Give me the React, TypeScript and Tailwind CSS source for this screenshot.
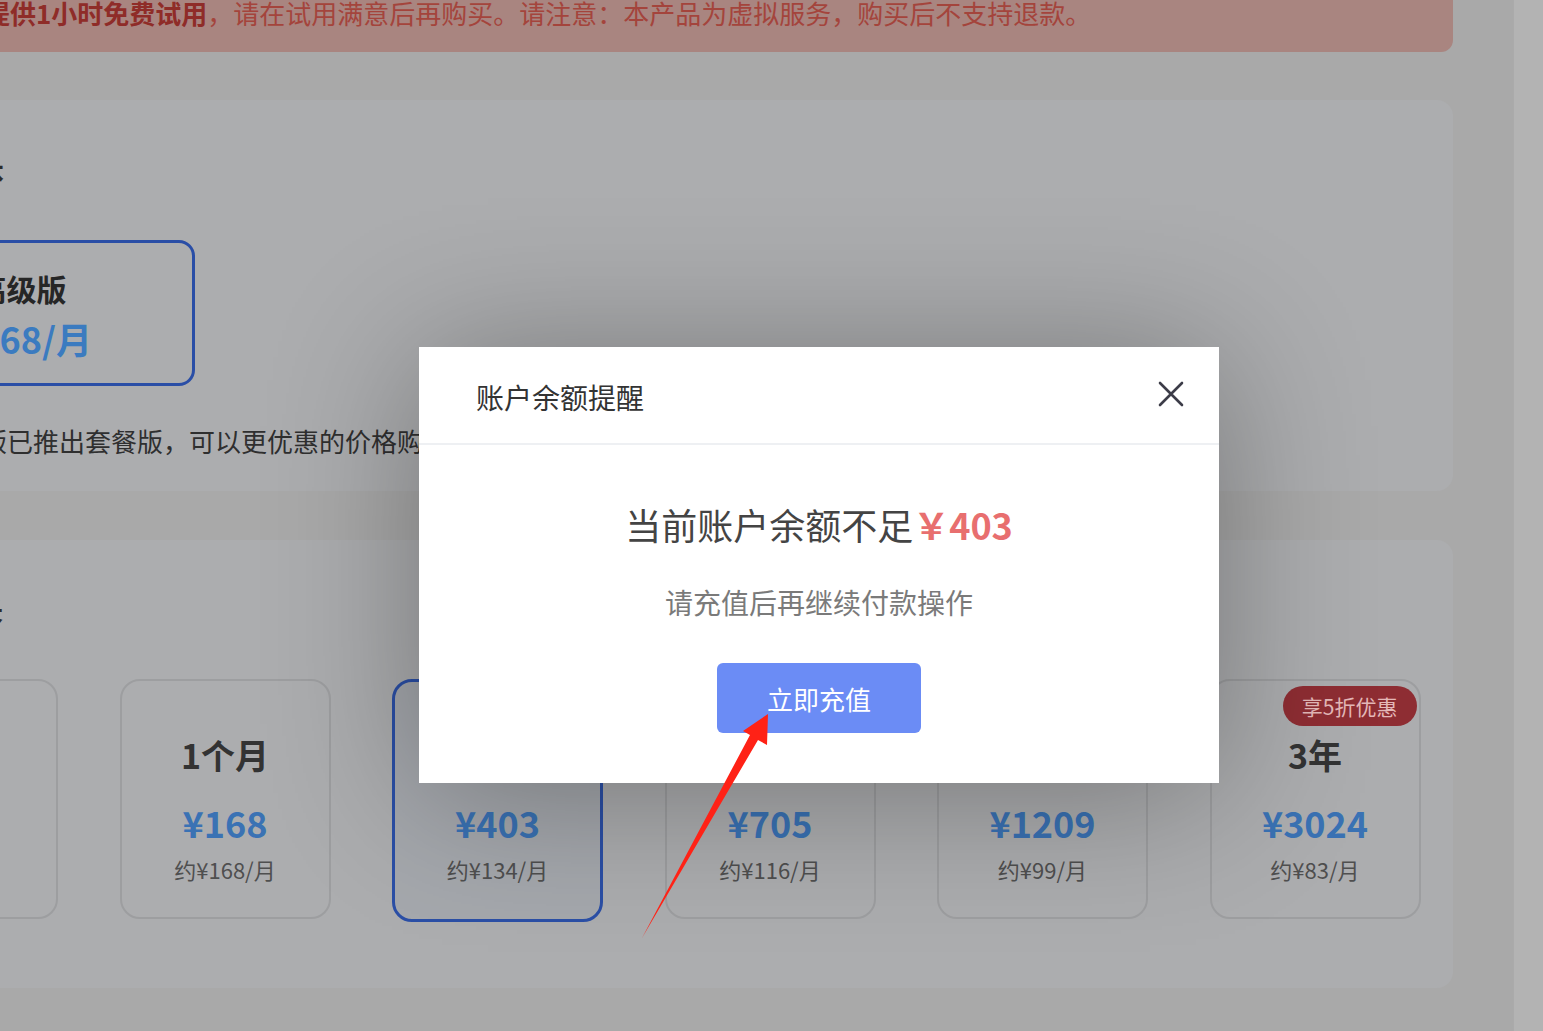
import { Fragment } from "react";

type Plan = {
  title: string;
  price: string;
  perMonth: string;
  selected?: boolean;
  badge?: string;
};

const plans: Plan[] = [
  { title: "7天", price: "¥42", perMonth: "约¥6/天" },
  { title: "1个月", price: "¥168", perMonth: "约¥168/月" },
  { title: "3个月", price: "¥403", perMonth: "约¥134/月", selected: true },
  { title: "6个月", price: "¥705", perMonth: "约¥116/月" },
  { title: "1年", price: "¥1209", perMonth: "约¥99/月" },
  { title: "3年", price: "¥3024", perMonth: "约¥83/月", badge: "享5折优惠" },
];

function PlanCard({ plan }: { plan: Plan }) {
  return (
    <div
      className={
        plan.selected
          ? "relative flex h-[243px] w-[211px] shrink-0 flex-col items-center rounded-[20px] border-[3px] border-[#2b4fa6] bg-[#a5a8ad] pt-[53px]"
          : "relative flex h-[240px] w-[211px] shrink-0 flex-col items-center rounded-[20px] border-2 border-[#9d9ea0] pt-[54px]"
      }
    >
      {plan.badge && (
        <div className="absolute right-[2px] top-[5px] rounded-full bg-[#8e2d33] px-[19px] text-[21px] leading-[40px] text-[#e4b8b8]">
          {plan.badge}
        </div>
      )}
      <div className="text-[34px] font-bold leading-[40px] text-[#333333]">{plan.title}</div>
      <div className="mt-[25px] text-[36px] font-bold leading-[44px] text-[#3a72b4]">{plan.price}</div>
      <div className="mt-[11px] text-[22px] leading-[28px] text-[#4f4f4f]">{plan.perMonth}</div>
    </div>
  );
}

export default function App() {
  return (
    <div className="relative flex h-[1031px] w-full overflow-hidden bg-[#a9a9a9] font-['Noto_Sans_CJK_SC','Noto_Sans',sans-serif]">
      <div className="min-w-0 flex-1 overflow-hidden">
        <div className="-ml-[220px] -mt-[28px] w-[1673px]">
          {/* notice bar */}
          <div className="rounded-br-xl bg-[#a98580] pb-[26px] pl-[22px] pt-[28px]">
            <p className="whitespace-nowrap text-[26px] leading-[26px] text-[#a4443c]">
              温馨提示：产品
              <span className="font-bold text-[#8f2c28]">提供1小时免费试用</span>
              ，请在试用满意后再购买。请注意：本产品为虚拟服务，购买后不支持退款。
            </p>
          </div>

          {/* version */}
          <section className="mt-[48px] h-[391px] rounded-2xl bg-[#acadaf] pl-[68px] pr-[32px] pt-[58px]">
            <h2 className="text-[26px] font-bold leading-[28px] text-[#2b2b2b]">选择产品版本</h2>
            <div className="mt-[54px] flex h-[146px] w-[347px] flex-col items-center rounded-2xl border-[3px] border-[#2a4ea6] pt-[27px]">
              <div className="text-[30px] font-bold leading-[36px] text-[#262626]">高级版</div>
              <div className="mt-[12px] pl-[6px] text-[36px] font-bold leading-[40px] text-[#3b7bc0]">¥168/月</div>
            </div>
            <p className="ml-[3px] mt-[39px] whitespace-nowrap text-[26px] leading-[32px] text-[#2f2f2f]">
              提示：高级版已推出套餐版，可以更优惠的价格购买更长时长。
            </p>
          </section>

          {/* duration */}
          <section className="mt-[49px] h-[448px] rounded-2xl bg-[#acadaf] pl-[67px] pt-[56px]">
            <h2 className="text-[26px] font-bold leading-[28px] text-[#2b2b2b]">选择购买时长</h2>
            <div className="mt-[55px] flex items-start gap-[61.5px]">
              {plans.map((p) => (
                <Fragment key={p.title}>
                  <PlanCard plan={p} />
                </Fragment>
              ))}
            </div>
          </section>
        </div>
      </div>

      {/* scrollbar track */}
      <div className="w-[30px] shrink-0 border-l border-[#aaaaaa] bg-[#b3b3b3]" />

      {/* dialog */}
      <div className="absolute left-[419px] top-[347px] h-[436px] w-[800px] bg-white shadow-[0_10px_140px_rgba(0,0,0,0.32)]">
        <div className="flex h-[98px] items-center justify-between border-b-2 border-[#eef0f3] pl-[57px] pr-[35px]">
          <h3 className="mt-[4px] text-[28px] leading-[36px] text-[#333333]">账户余额提醒</h3>
          <svg width="26" height="26" viewBox="0 0 26 26" className="-mt-[2px]">
            <path d="M2 2L24 24M24 2L2 24" stroke="#3c3c48" strokeWidth="2.6" strokeLinecap="round" />
          </svg>
        </div>
        <div className="flex flex-col items-center pt-[57px]">
          <p className="text-[36px] leading-[44px] text-[#444444]">
            当前账户余额不足
            <span className="font-semibold text-[#e86f6f]">￥403</span>
          </p>
          <p className="mt-[38px] text-[28px] leading-[36px] text-[#7a7a7a]">请充值后再继续付款操作</p>
          <button className="mt-[43px] h-[70px] w-[204px] rounded-md bg-[#6b8cf5] text-[26px] text-white">
            立即充值
          </button>
        </div>
      </div>

      {/* annotation arrow */}
      <svg className="pointer-events-none absolute left-0 top-0" width="1543" height="1031">
        <polygon points="642,938 750,735 743,731 768,714 767,745 758,740" fill="#ff2216" />
      </svg>
    </div>
  );
}
